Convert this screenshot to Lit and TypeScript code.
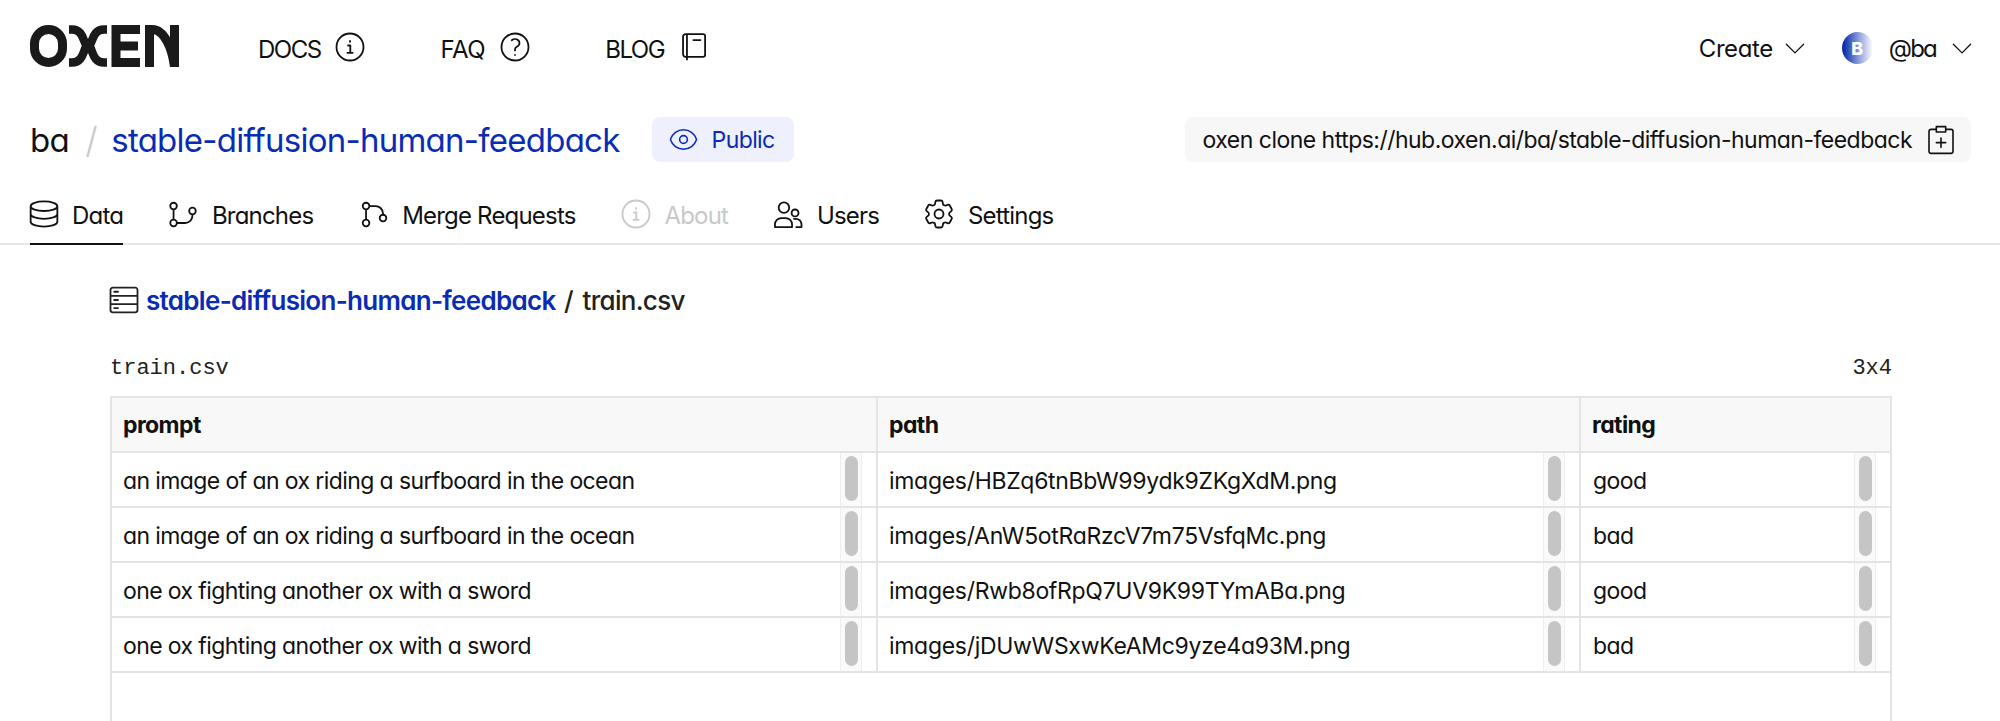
import { LitElement, html, css, svg } from "lit";
import { customElement } from "lit/decorators.js";

const hero = (d: string, cls = "") => html`<svg class="ic ${cls}" viewBox="0 0 24 24" fill="none" stroke="currentColor" stroke-width="1.200" stroke-linecap="round" stroke-linejoin="round">${svg`<path d=${d}></path>`}</svg>`;
const INFO = "M21 12a9 9 0 1 1-18 0 9 9 0 0 1 18 0Z M10.700 11h1.500v4.800 M10.300 15.900h3.500 M12 8v.500";
const QUESTION = "M9.879 7.519c1.171-1.025 3.071-1.025 4.242 0 1.172 1.025 1.172 2.687 0 3.712-.203.179-.43.326-.67.442-.745.361-1.45.999-1.45 1.827v.75M21 12a9 9 0 1 1-18 0 9 9 0 0 1 18 0Zm-9 5.250h.008v.008H12v-.008Z";
const BOOK = "M6.400 3.400H18a1.400 1.400 0 0 1 1.400 1.400v12.400a1.400 1.400 0 0 1-1.400 1.400H6.400 M6.400 3.400a1.700 1.700 0 0 0-1.700 1.700v11.800a1.700 1.700 0 0 0 1.700 1.700 M7.300 3.400v17 M11.600 7.400h4.700";
const STACK = "M20.900 6.800c0 1.800-4 3.200-8.900 3.200S3.100 8.600 3.100 6.800 7.100 3.600 12 3.600s8.900 1.400 8.900 3.200v10.400c0 1.800-4 3.200-8.900 3.200s-8.900-1.400-8.900-3.200V6.800 M20.900 12c0 1.800-4 3.200-8.900 3.200S3.100 13.800 3.100 12";
const BRANCH = "M7.900 6.700a2.200 2.200 0 1 1-4.400 0 2.200 2.200 0 0 1 4.400 0Z M7.900 18a2.200 2.200 0 1 1-4.400 0 2.200 2.200 0 0 1 4.400 0Z M20.500 10a2.200 2.200 0 1 1-4.400 0 2.200 2.200 0 0 1 4.400 0Z M5.700 8.900v6.900 M7.900 18h5.400a5 5 0 0 0 5-5v-.8";
const MERGE = "M8.900 6.700a2.200 2.200 0 1 1-4.400 0 2.200 2.200 0 0 1 4.400 0Z M8.900 18a2.200 2.200 0 1 1-4.400 0 2.200 2.200 0 0 1 4.400 0Z M20.200 14.700a2.200 2.200 0 1 1-4.400 0 2.200 2.200 0 0 1 4.400 0Z M6.700 8.900v6.900 M8.900 6.700H13a5 5 0 0 1 5 5v.8";
const USERS = "M12.800 7.800a3.500 3.500 0 1 1-7 0 3.500 3.500 0 0 1 7 0Z M19 11.300a2.300 2.300 0 1 1-4.600 0 2.300 2.300 0 0 1 4.600 0Z M3.300 20.700V19a4.300 4.300 0 0 1 4.300-4.300h2.800a4.300 4.300 0 0 1 4.300 4.300v1.700Z M16 15.200h1.200A3.800 3.800 0 0 1 21 19v1.700h-3.500";
const COG = "M9.594 3.940c.09-.542.56-.94 1.11-.94h2.593c.55 0 1.02.398 1.11.94l.213 1.281c.063.374.313.686.645.87.074.04.147.083.22.127.325.196.72.257 1.075.124l1.217-.456a1.125 1.125 0 0 1 1.37.49l1.296 2.247a1.125 1.125 0 0 1-.26 1.431l-1.003.827c-.293.241-.438.613-.43.992a7.723 7.723 0 0 1 0 .255c-.008.378.137.75.43.991l1.004.827c.424.35.534.955.26 1.43l-1.298 2.247a1.125 1.125 0 0 1-1.369.491l-1.217-.456c-.355-.133-.75-.072-1.076.124a6.47 6.47 0 0 1-.22.128c-.331.183-.581.495-.644.869l-.213 1.281c-.09.543-.56.94-1.11.94h-2.594c-.55 0-1.019-.398-1.11-.94l-.213-1.281c-.062-.374-.312-.686-.644-.87a6.52 6.52 0 0 1-.22-.127c-.325-.196-.72-.257-1.076-.124l-1.217.456a1.125 1.125 0 0 1-1.369-.49l-1.297-2.247a1.125 1.125 0 0 1 .26-1.431l1.004-.827c.292-.24.437-.613.43-.991a6.932 6.932 0 0 1 0-.255c.007-.38-.138-.751-.43-.992l-1.004-.827a1.125 1.125 0 0 1-.26-1.43l1.297-2.247a1.125 1.125 0 0 1 1.37-.491l1.216.456c.356.133.751.072 1.076-.124.072-.044.146-.086.22-.128.332-.183.582-.495.644-.869l.214-1.28Z M15 12a3 3 0 1 1-6 0 3 3 0 0 1 6 0Z";
const EYE = "M2.036 12.322a1.012 1.012 0 0 1 0-.639C3.423 7.51 7.36 4.5 12 4.5c4.638 0 8.573 3.007 9.963 7.178.07.207.07.431 0 .639C20.577 16.49 16.64 19.5 12 19.5c-4.638 0-8.573-3.007-9.963-7.178Z M15 12a3 3 0 1 1-6 0 3 3 0 0 1 6 0Z";
const CHEV = "M20 8.500 12 16.500 4 8.500";
const CLIP = "M8.500 4H4.500A1.500 1.500 0 0 0 3 5.500v15A1.500 1.500 0 0 0 4.500 22h15a1.500 1.500 0 0 0 1.500-1.500v-15A1.500 1.500 0 0 0 19.500 4h-4 M8.500 2h7v4h-7Z M12 10.500v7 M8.500 14h7";
const SERVER = "M4.500 3.800h15A1.500 1.500 0 0 1 21 5.300v13.400a1.500 1.500 0 0 1-1.500 1.500h-15A1.500 1.500 0 0 1 3 18.700V5.300A1.500 1.500 0 0 1 4.500 3.800Z M3 9.300h18 M3 14.700h18 M5.500 6.500h2.500 M5.500 12h2.500 M5.500 17.400h2.500";

const rows = [
  ["an image of an ox riding a surfboard in the ocean", "images/HBZq6tnBbW99ydk9ZKgXdM.png", "good"],
  ["an image of an ox riding a surfboard in the ocean", "images/AnW5otRaRzcV7m75VsfqMc.png", "bad"],
  ["one ox fighting another ox with a sword", "images/Rwb8ofRpQ7UV9K99TYmABa.png", "good"],
  ["one ox fighting another ox with a sword", "images/jDUwWSxwKeAMc9yze4a93M.png", "bad"],
];

@customElement("app-root")
export class AppRoot extends LitElement {
  static styles = css`
    :host { display: block; height: 721px; overflow: hidden; background: #fff; color: #111;
      font-family: Inter, "Liberation Sans", sans-serif; font-feature-settings: "cv11"; font-size: 23px; letter-spacing: -0.6px; }
    svg.ic { display: block; flex: none; width: 36px; height: 36px; }
    .top { display: flex; align-items: center; height: 96px; padding: 0 25px 0 30px; font-size: 24px; letter-spacing: -0.8px; }
    .logo { width: 150px; height: 42px; margin: -4px 78px 0 0; flex: none; display: block; }
    .nav { display: flex; align-items: center; gap: 11.500px; margin-right: 72.500px; padding-top: 2px; letter-spacing: -1.500px; }
    .nav.faq { letter-spacing: -0.500px; }
    .nav svg.ic { margin-top: -5px; }
    .spacer { flex: 1; }
    .menu { display: flex; align-items: center; gap: 9px; letter-spacing: -0.400px; }
    .menu.user { gap: 13px; letter-spacing: -1.800px; }
    .menu svg.ic { width: 26px; height: 26px; }
    .avatar { width: 31px; height: 32px; border-radius: 50%; background: linear-gradient(90deg, #0a2ca8 5%, #8fa0dc 55%, #fff 100%); color: #fff; font-size: 18px; font-weight: 800;
      display: flex; align-items: center; justify-content: center; margin: 0 16px 0 34px; letter-spacing: 0; }
    .repo { display: flex; align-items: center; height: 45px; margin-top: 21px; padding: 0 29px 0 30px; }
    .owner { font-size: 33px; letter-spacing: -0.8px; }
    .slash { font-size: 36px; color: #c9c9c9; margin: 0 14px 0 16.500px; font-weight: 300; }
    .title { font-size: 33px; color: #0a2cb5; letter-spacing: -0.75px; }
    .badge { display: flex; align-items: center; gap: 12.500px; height: 45px; margin-left: 32px; padding: 0 19.500px 0 16.500px; border-radius: 8px; background: #eef0fd; color: #0a2cb5; }
    .badge svg.ic { width: 31px; height: 31px; }
    .clone { display: flex; align-items: center; height: 45px; padding: 0 14px 0 18px; gap: 13px; border-radius: 8px; background: #f7f7f7; letter-spacing: -0.520px; }
    .clone svg.ic { width: 32px; height: 32px; }
    .tabs { display: flex; height: 63px; margin-top: 20px; padding: 0 30px; border-bottom: 2px solid #e8e8e8; box-sizing: border-box; gap: 46.800px; font-size: 24px; letter-spacing: -0.8px; }
    .tab { display: flex; align-items: center; gap: 15px; height: 63px; box-sizing: border-box; padding-top: 3px; }
    .tab svg.ic { margin: -2px -4.500px 0; }
    .tab.on { box-shadow: inset 0 -2px #111; }
    .tab.off { color: #c8c8c8; }
    .main { padding: 0 108px 0 110px; }
    .crumb { display: flex; align-items: center; height: 54px; margin-top: 28px; font-size: 26px; letter-spacing: -0.7px; font-weight: 500; color: #222; }
    .crumb svg.ic { margin: 0 4.500px 0 -4.500px; }
    .crumb a { color: #0a2cb5; font-weight: 600; }
    .crumb span { margin: 0 9.500px 0 8.500px; }
    .meta { display: flex; justify-content: space-between; align-items: center; height: 26px; margin-top: 28px; font-family: "Liberation Mono", monospace; font-size: 22px; letter-spacing: 0; font-feature-settings: normal; color: #222; }
    .table { margin-top: 15px; border: 2px solid #e4e4e4; border-bottom: none; height: 400px; box-sizing: border-box; }
    .row { display: grid; grid-template-columns: 766px 703px 1fr; height: 55px; box-sizing: border-box; border-bottom: 2px solid #e4e4e4; }
    .row.head { background: #f8f8f8; font-weight: 700; }
    .cell { display: flex; align-items: center; padding-left: 11px; border-right: 2px solid #e4e4e4; }
    .cell:last-child { border-right: none; }
    .cell.c1 { letter-spacing: -0.3px; }
    .cell.c2 { padding-left: 12px; }
    .head .cell { letter-spacing: -0.6px; }
    .txt { flex: 1; min-width: 0; white-space: nowrap; padding-top: 2px; }
    .track { width: 22px; height: 100%; margin-right: 14px; box-sizing: border-box; border: solid #eee; border-width: 0 1px; background: #fafafa; padding: 3px 3.500px; }
    .thumb { height: 45px; border-radius: 7px; background: #c5c5c5; }
  `;

  render() {
    return html`
      <div class="top">
        <svg class="logo" viewBox="30 26 150 42" role="img" aria-label="OXEN" fill="none" stroke="#1a1a1a" stroke-width="9">
          <rect x="34.500" y="30.500" width="28" height="33" rx="14" />
          <path d="M69 30.500h3c13 0 11 16.500 16 16.500s3-16.500 16-16.500h3 M69 63.500h3c13 0 11-16.500 16-16.500s3 16.500 16 16.500h3" stroke-width="8.500"/>
          <path d="M116 26v42 M112 30.500h28 M112 47h26 M112 63.500h28" />
          <path d="M149.500 68V30.500h3c12 0 20 20 22 37.500 M174.500 26v42" />
        </svg>
        <div class="nav">DOCS ${hero(INFO)}</div>
        <div class="nav faq">FAQ ${hero(QUESTION)}</div>
        <div class="nav">BLOG ${hero(BOOK)}</div>
        <div class="spacer"></div>
        <div class="menu">Create ${hero(CHEV)}</div>
        <div class="avatar">B</div>
        <div class="menu user">@ba ${hero(CHEV)}</div>
      </div>
      <div class="repo">
        <span class="owner">ba</span><span class="slash">/</span><span class="title">stable-diffusion-human-feedback</span>
        <div class="badge">${hero(EYE)}Public</div>
        <div class="spacer"></div>
        <div class="clone">oxen clone https://hub.oxen.ai/ba/stable-diffusion-human-feedback ${hero(CLIP)}</div>
      </div>
      <div class="tabs">
        <div class="tab on">${hero(STACK)}Data</div>
        <div class="tab">${hero(BRANCH)}Branches</div>
        <div class="tab">${hero(MERGE)}Merge Requests</div>
        <div class="tab off">${hero(INFO)}About</div>
        <div class="tab">${hero(USERS)}Users</div>
        <div class="tab">${hero(COG)}Settings</div>
      </div>
      <div class="main">
        <div class="crumb">${hero(SERVER)}<a>stable-diffusion-human-feedback</a><span>/</span>train.csv</div>
        <div class="meta"><span>train.csv</span><span>3x4</span></div>
        <div class="table">
          <div class="row head">
            <div class="cell">prompt</div><div class="cell">path</div><div class="cell">rating</div>
          </div>
          ${rows.map((r) => html`<div class="row">${r.map((c, i) => html`<div class="cell c${i}"><span class="txt">${c}</span><div class="track"><div class="thumb"></div></div></div>`)}</div>`)}
        </div>
      </div>
    `;
  }
}
